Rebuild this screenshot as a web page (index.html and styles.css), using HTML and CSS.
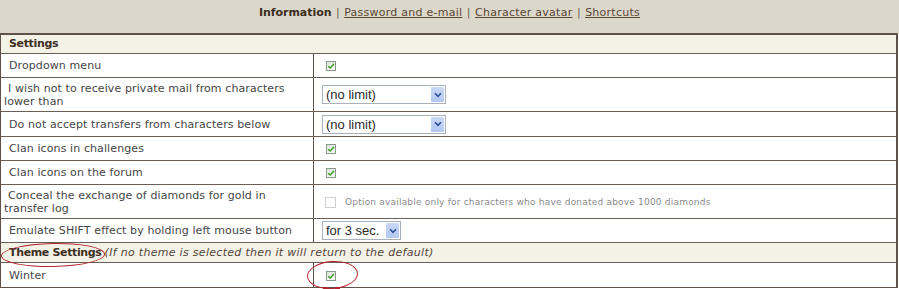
FILE: index.html
```html
<!DOCTYPE html>
<html lang="en">
<head>
<meta charset="utf-8">
<title>Settings</title>
<link rel="stylesheet" href="styles.css">
</head>
<body>
<div class="page">
  <div class="nav">
    <b>Information</b> <span class="sep">|</span> <a href="#">Password and e-mail</a> <span class="sep">|</span> <a href="#">Character avatar</a> <span class="sep">|</span> <a href="#">Shortcuts</a>
  </div>
  <table class="settings">
    <tr class="head h-head"><th colspan="2">Settings</th></tr>
    <tr class="h24">
      <td class="lbl">Dropdown menu</td>
      <td class="val"><span class="cb"><svg viewBox="0 0 10 10" width="8" height="8"><path d="M1.5 5.2 L4 7.6 L8.6 2.4" fill="none" stroke="#3f9a2c" stroke-width="1.8"/></svg></span></td>
    </tr>
    <tr class="h34">
      <td class="lbl two">I wish not to receive private mail from characters<br>lower than</td>
      <td class="val"><span class="sel w123"><span class="sv">(no limit)</span><span class="sb"><svg viewBox="0 0 8 6" width="8" height="6"><path d="M1 1.2 L4 4.4 L7 1.2" fill="none" stroke="#2f4f9a" stroke-width="1.6"/></svg></span></span></td>
    </tr>
    <tr class="h25">
      <td class="lbl">Do not accept transfers from characters below</td>
      <td class="val"><span class="sel w123"><span class="sv">(no limit)</span><span class="sb"><svg viewBox="0 0 8 6" width="8" height="6"><path d="M1 1.2 L4 4.4 L7 1.2" fill="none" stroke="#2f4f9a" stroke-width="1.6"/></svg></span></span></td>
    </tr>
    <tr class="h24">
      <td class="lbl">Clan icons in challenges</td>
      <td class="val"><span class="cb"><svg viewBox="0 0 10 10" width="8" height="8"><path d="M1.5 5.2 L4 7.6 L8.6 2.4" fill="none" stroke="#3f9a2c" stroke-width="1.8"/></svg></span></td>
    </tr>
    <tr class="h24">
      <td class="lbl">Clan icons on the forum</td>
      <td class="val"><span class="cb"><svg viewBox="0 0 10 10" width="8" height="8"><path d="M1.5 5.2 L4 7.6 L8.6 2.4" fill="none" stroke="#3f9a2c" stroke-width="1.8"/></svg></span></td>
    </tr>
    <tr class="h34">
      <td class="lbl two">Conceal the exchange of diamonds for gold in<br>transfer log</td>
      <td class="val"><span class="cb off"></span><span class="note">Option available only for characters who have donated above 1000 diamonds</span></td>
    </tr>
    <tr class="h24">
      <td class="lbl">Emulate SHIFT effect by holding left mouse button</td>
      <td class="val"><span class="sel w78"><span class="sv">for 3 sec.</span><span class="sb"><svg viewBox="0 0 8 6" width="8" height="6"><path d="M1 1.2 L4 4.4 L7 1.2" fill="none" stroke="#2f4f9a" stroke-width="1.6"/></svg></span></span></td>
    </tr>
    <tr class="head h21"><th colspan="2">Theme Settings<i>(If no theme is selected then it will return to the default)</i></th></tr>
    <tr class="h24 last">
      <td class="lbl">Winter</td>
      <td class="val"><span class="cb"><svg viewBox="0 0 10 10" width="8" height="8"><path d="M1.5 5.2 L4 7.6 L8.6 2.4" fill="none" stroke="#3f9a2c" stroke-width="1.8"/></svg></span></td>
    </tr>
  </table>
  <span class="ring ring-theme"></span>
  <span class="ring ring-winter"></span>
  <span class="mark mark-a"></span>
  <span class="mark mark-b"></span>
</div>
</body>
</html>
```

FILE: styles.css
```css
html, body {
  margin: 0;
  padding: 0;
  background: #ffffff;
}

body {
  font-family: "DejaVu Sans", Verdana, sans-serif;
  font-size: 11px;
  color: #444444;
}

.page {
  position: relative;
  width: 899px;
  height: 289px;
  overflow: hidden;
}

.nav {
  height: 33px;
  box-sizing: border-box;
  padding-top: 6px;
  line-height: 14px;
  text-align: center;
  background: #dcd7cb;
  color: #5a4b3d;
  font-size: 11px;
}

.nav b {
  color: #3a2d21;
  letter-spacing: -0.05px;
}

.nav a {
  color: #5a4836;
  text-decoration: underline;
  letter-spacing: 0.25px;
}

.nav .sep {
  color: #6e6152;
  margin: 0 1px;
}

.settings {
  width: 898px;
  border-collapse: separate;
  border-spacing: 0;
  border-top: 2px solid #5f5249;
  border-left: 1px solid #5f5249;
  border-right: 2px solid #5f5249;
  border-bottom: 1px solid #5f5249;
}

.settings td,
.settings th {
  padding: 0 3px;
  border-bottom: 1px solid #6a5f57;
  vertical-align: middle;
}

.settings tr.last td {
  border-bottom: none;
}

.settings .head th {
  text-align: left;
  background: #f4f1e7;
  color: #3c2f22;
  font-weight: bold;
  padding-left: 8px;
  line-height: 14px;
  letter-spacing: -0.35px;
}

.head th i {
  font-weight: normal;
  color: #54473a;
  margin-left: 3px;
  letter-spacing: 0.3px;
}

.h-head { height: 19px; }
.h21 { height: 20px; }
.h24 { height: 24px; }
.h25 { height: 25px; }
.h34 { height: 34px; }

.settings .lbl {
  width: 306px;
  border-right: 1px solid #5f5249;
  padding-left: 3px;
  text-indent: 5px;
  line-height: 13px;
  color: #454545;
  letter-spacing: 0.1px;
}

.settings .lbl.two {
  text-indent: 4px;
}

.settings .val {
  padding-left: 8px;
}

.cb {
  display: inline-flex;
  align-items: center;
  justify-content: center;
  width: 10px;
  height: 10px;
  box-sizing: border-box;
  margin-left: 4px;
  border: 1px solid #8b9a8f;
  background: linear-gradient(#dfe8dc, #f6f8f4);
  vertical-align: middle;
}

.cb.off {
  width: 11px;
  height: 11px;
  margin-left: 3px;
  border-color: #cfcfcf;
  background: #ffffff;
}

.note {
  font-size: 9px;
  color: #8a8a8a;
  margin-left: 9px;
  vertical-align: middle;
  letter-spacing: 0.2px;
}

.sel {
  display: inline-flex;
  align-items: stretch;
  height: 19px;
  box-sizing: border-box;
  border: 1px solid #a9b1bc;
  background: #ffffff;
  vertical-align: middle;
  font-family: "Liberation Sans", Arial, sans-serif;
  font-size: 13px;
  color: #2a2a2a;
}

.w123 { width: 124px; }
.w78 { width: 79px; }

.sv {
  flex: 1;
  padding-left: 3px;
  line-height: 17px;
  white-space: nowrap;
}

.sb {
  width: 13px;
  margin: 1px;
  display: flex;
  align-items: center;
  justify-content: center;
  background: linear-gradient(#c9d8f6, #b3c8f1);
  border-radius: 1px;
}

.ring {
  position: absolute;
  border: 1px solid #b3262c;
  border-radius: 50%;
}

.ring-theme {
  left: 1px;
  top: 243px;
  width: 102px;
  height: 22px;
  transform: rotate(-1deg);
}

.ring-winter {
  left: 307px;
  top: 261px;
  width: 49px;
  height: 26px;
  transform: rotate(-4deg);
}

.mark {
  position: absolute;
  top: 287px;
  width: 5px;
  height: 3px;
  background: #b3262c;
}

.mark-a { left: 323px; }
.mark-b { left: 335px; }
```
